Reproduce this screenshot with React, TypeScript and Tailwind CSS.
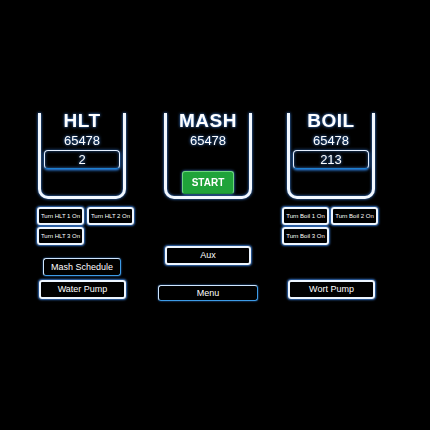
import React from "react";

const glow = "shadow-[0_0_2px_1px_rgba(70,150,255,0.75)]";

function Vessel({
  title,
  value,
  className,
  children,
}: {
  title: string;
  value: string;
  className?: string;
  children?: React.ReactNode;
}) {
  return (
    <div
      className={`w-[88px] h-[86px] border-[3px] border-t-0 border-[#f2f8ff] rounded-b-[10px] flex flex-col items-center drop-shadow-[0_0_1.5px_rgba(70,150,255,0.9)] ${className ?? ""}`}
    >
      <div className="-mt-[2px] text-[19px] font-bold leading-none tracking-[0.5px]">{title}</div>
      <div className="mt-[4px] text-[13px] leading-[13px]">{value}</div>
      {children}
    </div>
  );
}

function Readout({ value }: { value: string }) {
  return (
    <div className="mt-[3px] w-[76px] h-[19px] rounded-[4px] border-[1.5px] border-[#e6f0ff] border-b-[#1f7fd0] flex items-center justify-center text-[13px] leading-none shadow-[0_1px_2px_rgba(40,130,230,0.8)]">
      {value}
    </div>
  );
}

function SmallBtn({ label }: { label: string }) {
  return (
    <div
      className={`w-[47px] h-[18px] rounded-[3px] border-2 border-[#eef6ff] flex items-center justify-center text-[6px] leading-none whitespace-nowrap ${glow}`}
    >
      {label}
    </div>
  );
}

function Btn({
  label,
  className,
  blue,
}: {
  label: string;
  className?: string;
  blue?: boolean;
}) {
  const edge = blue
    ? "border-[1.5px] border-[#3d9be6] border-t-[#cfe6ff] border-l-[#cfe6ff] shadow-[0_0_2px_rgba(60,150,255,0.8)]"
    : `border-2 border-[#eef6ff] ${glow}`;
  return (
    <div
      className={`rounded-[3px] flex items-center justify-center text-[9px] leading-none whitespace-nowrap ${edge} ${className ?? ""}`}
    >
      {label}
    </div>
  );
}

export default function App() {
  return (
    <div className="w-[430px] h-[430px] bg-black overflow-hidden text-white font-['Liberation_Sans',Arial,sans-serif]">
      <div className="flex pt-[113px] pl-[37px]">
        {/* HLT column */}
        <div className="w-[96px] flex flex-col">
          <Vessel title="HLT" value="65478" className="ml-[1px]">
            <Readout value="2" />
          </Vessel>
          <div className="mt-[8px] grid grid-cols-[47px_47px] gap-x-[3px] gap-y-[2px]">
            <SmallBtn label="Turn HLT 1 On" />
            <SmallBtn label="Turn HLT 2 On" />
            <SmallBtn label="Turn HLT 3 On" />
          </div>
          <Btn label="Mash Schedule" blue className="mt-[13px] ml-[6px] w-[78px] h-[18px]" />
          <Btn label="Water Pump" className="mt-[4px] ml-[2px] w-[87px] h-[19px]" />
        </div>

        {/* Mash column */}
        <div className="ml-[25px] w-[100px] flex flex-col">
          <Vessel title="MASH" value="65478" className="ml-[6px]">
            <div className="mt-[24px] w-[52px] h-[23px] rounded-[3px] bg-[#1fa33a] border border-[#6fd67f] border-b-[#1a8f33] flex items-center justify-center text-[10px] font-bold leading-none">
              START
            </div>
          </Vessel>
          <Btn label="Aux" className="mt-[47px] ml-[7px] w-[86px] h-[19px]" />
          <Btn label="Menu" blue className="mt-[20px] w-[100px] h-[16px]" />
        </div>

        {/* Boil column */}
        <div className="ml-[24px] w-[95px] flex flex-col">
          <Vessel title="BOIL" value="65478" className="ml-[5px]">
            <Readout value="213" />
          </Vessel>
          <div className="mt-[8px] grid grid-cols-[47px_47px] gap-x-[2px] gap-y-[2px]">
            <SmallBtn label="Turn Boil 1 On" />
            <SmallBtn label="Turn Boil 2 On" />
            <SmallBtn label="Turn Boil 3 On" />
          </div>
          <Btn label="Wort Pump" className="mt-[35px] ml-[6px] w-[87px] h-[19px]" />
        </div>
      </div>
    </div>
  );
}
